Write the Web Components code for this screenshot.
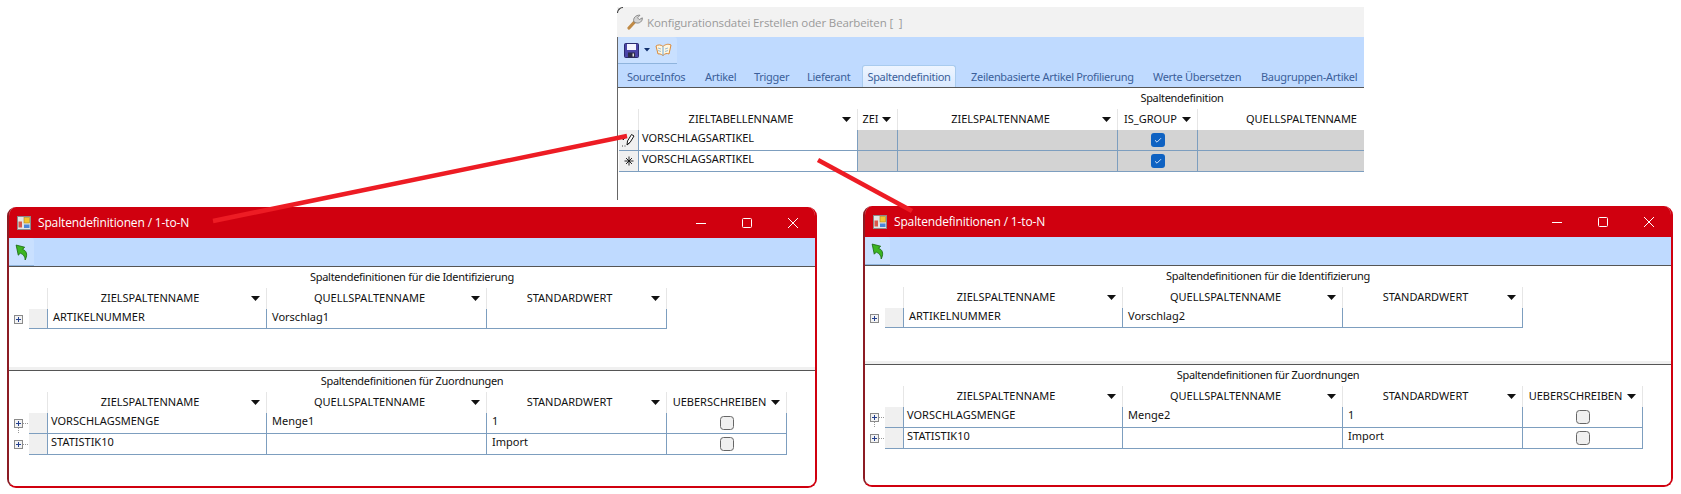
<!DOCTYPE html>
<html lang="de">
<head>
<meta charset="utf-8">
<title>Spaltendefinition</title>
<style>
  html, body { margin: 0; padding: 0; background: #fff; overflow: hidden; }
  body { width: 1681px; height: 494px; position: relative; font-family: "Noto Sans", "Liberation Sans", sans-serif; }
</style>
</head>
<body>
<template id="tpl-window">
  <style>
    :host { position: absolute; display: flex; flex-direction: column; box-sizing: border-box; overflow: hidden;
      background: #f0f0f0; border: solid #d0000f; border-width: 0 2px 2px 2px; border-left-color: #8c1c24; border-radius: 9px; }
    .title { flex: none; height: 31px; margin: 0 -2px; display: flex; align-items: center; background: #d0000f; color: #fff;
      font: 12px "Open Sans", "Noto Sans", sans-serif; letter-spacing: -.15px; padding-left: 10px; }
    ::slotted(.icon) { margin-right: 7px; flex: none; }
    .title .name { flex: 1; white-space: pre; }
    .controls { display: flex; padding-right: 1px; }
    .controls span { width: 46px; height: 31px; display: flex; align-items: center; justify-content: center; }
    .bar { flex: none; background: #bfdaff; }
    .body { flex: 1; min-height: 0; display: flex; flex-direction: column; gap: 3px; }
    :host([inactive]) { background: #fff; border: 0; border-left: 1px solid #666; border-radius: 0; overflow: visible; }
    :host([inactive])::before { content: ""; position: absolute; left: -1px; top: 0; width: 6px; height: 6px; box-sizing: border-box;
      border-top: 1px solid #333; border-left: 1px solid #333; border-radius: 6px 0 0 0; }
    :host([inactive]) .title { height: 30px; margin: 0 0 0 -1px; background: #f2f2f2; color: #9a9a9a; padding-left: 10px; font-size: 11.5px; letter-spacing: -.12px; }
    :host([inactive]) ::slotted(.icon) { margin-right: 4px; }
    :host([inactive]) .controls { display: none; }
  </style>
  <div class="title">
    <slot name="icon"></slot>
    <span class="name"><slot name="title"></slot></span>
    <div class="controls">
      <span><svg width="12" height="12" viewBox="0 0 12 12"><path d="M1 6.500h10" stroke="#fff" fill="none"/></svg></span>
      <span><svg width="12" height="12" viewBox="0 0 12 12"><rect x="1.500" y="1.500" width="9" height="9" rx="1" stroke="#fff" fill="none"/></svg></span>
      <span><svg width="12" height="12" viewBox="0 0 12 12"><path d="M1 1l10 10M11 1L1 11" stroke="#fff" fill="none"/></svg></span>
    </div>
  </div>
  <div class="bar"><slot name="bar"></slot></div>
  <div class="body"><slot></slot></div>
</template>

<template id="tpl-section">
  <style>
    :host { display: block; box-sizing: border-box; background: #fff; border-top: 1px solid #555; overflow: hidden; min-width: 0; }
    :host([fill]) { flex: 1; }
    .caption { height: 21px; line-height: 19px; text-align: center; font-size: 11px; color: #111;
      letter-spacing: -.3px; white-space: nowrap; }
  </style>
  <div class="caption"></div>
  <slot></slot>
</template>

<template id="tpl-bar">
  <style>
    :host { display: flex; height: 27px; align-items: stretch; }
    .btns { display: flex; align-items: center; gap: 5px; padding: 0 5px 0 6px; background: #c9e0ff; border-bottom: 1px solid #8fb4dd; border-radius: 3px 3px 0 0; box-sizing: border-box; height: 100%; }
  </style>
  <div class="btns"><slot></slot></div>
</template>

<template id="tpl-tabs">
  <style>
    :host { display: flex; height: 23px; align-items: flex-end; font-size: 11px; color: #3b5f9a; }
  </style>
  <slot></slot>
</template>

<template id="tpl-tab">
  <style>
    :host { display: block; box-sizing: border-box; height: 21px; line-height: 21px; white-space: nowrap; margin-top: 2px; letter-spacing: -.3px; }
    :host([active]) { height: 22px; background: linear-gradient(#eef5ff, #d9e9ff); border: 1px solid #a9cbee; border-bottom: 0; border-radius: 3px 3px 0 0; }
  </style>
  <slot></slot>
</template>

<script>
  // small stamps shared by the table cells
  const ICONS = {
    plus: `<svg width="9" height="9" viewBox="0 0 9 9"><rect x=".5" y=".5" width="8" height="8" fill="#f3f3f3" stroke="#8a8a8a"/><path d="M2 4.500h5M4.500 2v5" stroke="#24408e"/></svg>`,
    pencil: `<svg width="18" height="18" viewBox="0 0 18 18"><path d="M7 14l.5-4 4-6.500 2.500 1.500-4 6.500zM7 14l2.500-2.500" fill="#fff" stroke="#111"/><path d="M2 15h1M4.500 15h1M3 5l2 2-2 2z" stroke="#111" fill="#111" stroke-width=".8"/></svg>`,
    star: `<svg width="18" height="18" viewBox="0 0 18 18"><path d="M9 4.500v9M4.500 9h9M6 6l6 6M12 6l-6 6" stroke="#111" stroke-width=".9"/></svg>`,
    on: `<svg width="14" height="14" viewBox="0 0 14 14"><rect width="14" height="14" rx="3" fill="#0f62c2"/><path d="M4 7.300l2 1.900 4-4" stroke="#cfe2fb" fill="none"/></svg>`,
    off: `<svg width="14" height="14" viewBox="0 0 14 14"><rect x=".5" y=".5" width="13" height="13" rx="3" fill="#f0f0f0" stroke="#666"/></svg>`,
    arrow: `<svg width="9" height="5" viewBox="0 0 9 5"><path d="M0 0h9L4.500 5z" fill="#111"/></svg>`
  };

  class AppWindow extends HTMLElement {
    constructor() {
      super();
      this.attachShadow({ mode: 'open' }).appendChild(document.getElementById('tpl-window').content.cloneNode(true));
    }
  }

  class GridSection extends HTMLElement {
    constructor() {
      super();
      this.attachShadow({ mode: 'open' }).appendChild(document.getElementById('tpl-section').content.cloneNode(true));
    }
    connectedCallback() {
      this.shadowRoot.querySelector('.caption').textContent = this.getAttribute('caption');
      if (this.hasAttribute('pad')) {
        this.shadowRoot.querySelector('.caption').style.paddingLeft = this.getAttribute('pad') + 'px';
      }
    }
  }

  class ToolBar extends HTMLElement {
    constructor() {
      super();
      this.attachShadow({ mode: 'open' }).appendChild(document.getElementById('tpl-bar').content.cloneNode(true));
    }
  }

  class TabStrip extends HTMLElement {
    constructor() {
      super();
      this.attachShadow({ mode: 'open' }).appendChild(document.getElementById('tpl-tabs').content.cloneNode(true));
    }
  }

  class TabItem extends HTMLElement {
    constructor() {
      super();
      this.attachShadow({ mode: 'open' }).appendChild(document.getElementById('tpl-tab').content.cloneNode(true));
    }
  }

  // cols: JSON [[name, width]], rows: JSON [{m: marker, c: [cells]}]
  class DataTable extends HTMLElement {
    constructor() {
      super();
      this.attachShadow({ mode: 'open' });
    }
    connectedCallback() {
      const cols = JSON.parse(this.getAttribute('cols'));
      const rows = JSON.parse(this.getAttribute('rows'));
      const gutter = Number(this.getAttribute('gutter') || 0);
      const head = Number(this.getAttribute('head-width') || 18);
      const rowH = Number(this.getAttribute('row-h') || 21);
      const tree = this.hasAttribute('tree');
      const template = `${gutter ? gutter + 'px ' : ''}${head}px ${cols.map(c => c[1] + 'px').join(' ')}`;
      let html = `<style>
        :host { display: block; }
        .g { display: grid; grid-template-columns: ${template}; grid-auto-rows: ${rowH}px; grid-template-rows: 21px; justify-content: start; font-size: 11px; color: #111; }
        .g > div { box-sizing: border-box; min-width: 0; white-space: nowrap; overflow: hidden; }
        .hd { position: relative; text-align: center; line-height: 19px; border-right: 1px solid #e6e6e6; padding-right: 14px; }
        .hd.first { border-left: 1px solid #e6e6e6; }
        .hd svg { position: absolute; right: 6px; top: 8px; }
        .hd.clip { text-align: right; padding-right: 8px; border-right: 0; }
        .cell { border-right: 1px solid #7d9ebf; border-bottom: 1px solid #7d9ebf; line-height: 16px; padding-left: 5px; }
        .cell.first { border-left: 1px solid #7d9ebf; padding-left: var(--first-pad, 3px); }
        .cell.gray { background: #d3d3d3; }
        .cell.chk { display: flex; align-items: center; justify-content: center; padding: 0 0 1px; }
        .rh { background: #f0f0f0; border: solid #7d9ebf; border-width: 0 0 1px 0; display: flex; align-items: center; justify-content: center; }
        .gut { position: relative; }
        .gut svg { position: absolute; left: 5px; top: 6px; }
        .dots { position: absolute; left: 14px; top: 10px; width: 5px; border-top: 1px dotted #999; }
        .vdots { position: absolute; left: 9px; top: 15px; height: 7px; border-left: 1px dotted #999; }
      </style><div class="g">`;
      if (gutter) html += '<div></div>';
      html += '<div></div>';
      cols.forEach((c, i) => {
        const clip = c[2] === 'clip';
        html += `<div class="hd${i === 0 ? ' first' : ''}${clip ? ' clip' : ''}">${c[0]}${clip ? '' : ICONS.arrow}</div>`;
      });
      rows.forEach((r, ri) => {
        if (gutter) {
          html += `<div class="gut">${ICONS.plus}${tree ? '<span class="dots"></span>' : ''}${tree && ri < rows.length - 1 ? '<span class="vdots"></span>' : ''}</div>`;
        }
        html += `<div class="rh">${r.m ? ICONS[r.m] : ''}</div>`;
        r.c.forEach((c, i) => {
          const first = i === 0 ? ' first' : '';
          const gray = r.gray && r.gray.includes(i) ? ' gray' : '';
          if (c === '#on' || c === '#off') {
            html += `<div class="cell chk${first}${gray}">${ICONS[c.slice(1)]}</div>`;
          } else {
            html += `<div class="cell${first}${gray}">${c}</div>`;
          }
        });
      });
      html += '</div>';
      this.shadowRoot.innerHTML = html;
    }
  }

  customElements.define('app-window', AppWindow);
  customElements.define('grid-section', GridSection);
  customElements.define('tool-bar', ToolBar);
  customElements.define('tab-strip', TabStrip);
  customElements.define('tab-item', TabItem);
  customElements.define('data-table', DataTable);
</script>

<!-- main window, cropped on the right in the screenshot -->
<app-window inactive style="left:617px;top:7px;width:747px;height:193px;">
  <svg slot="icon" class="icon" width="16" height="16" viewBox="0 0 16 16">
    <path d="M2 14l6-6.500" stroke="#c08a45" stroke-width="3.200" stroke-linecap="round"/>
    <path d="M7 8C5.500 4.500 8.500 .8 13 1.200l-2.500 2.600 1.800 1.800 3-1.800c.5 3.500-3 6.200-6.500 5z" fill="#d4d4d4" stroke="#777" stroke-width=".8"/>
  </svg>
  <span slot="title">Konfigurationsdatei Erstellen oder Bearbeiten [  ]</span>
  <div slot="bar">
    <tool-bar style="width:58px">
      <svg width="15" height="15" viewBox="0 0 15 15"><rect x=".5" y=".5" width="14" height="14" rx="1" fill="#4b45a8" stroke="#2a2a6e"/><rect x="3" y="1" width="9" height="6" fill="#f4f4ff"/><rect x="4" y="9.500" width="7" height="5" fill="#2c2c48"/><rect x="8.500" y="10.500" width="1.500" height="3" fill="#ddd"/></svg>
      <svg width="6" height="4" viewBox="0 0 6 4"><path d="M0 0h6L3 3.500z" fill="#12306e"/></svg>
      <svg width="17" height="14" viewBox="0 0 17 14"><path d="M1 3c2-1.500 5-1.500 7 .5 2-2 5-3 8-1.500l-2 9c-2-1-4-.5-6 1.500-2-1.500-4-2-5-1.500z" fill="#fff6df" stroke="#d98a3a"/><path d="M8 3.500L8 12.500" stroke="#6aa5d8"/><path d="M3 5l3 1M3 7.500l3 1M10 6l3-1M10 8.500l3-1" stroke="#6aa5d8" stroke-width=".7"/></svg>
    </tool-bar>
    <tab-strip>
      <tab-item style="margin-left:9px;width:78px">SourceInfos</tab-item>
      <tab-item style="width:49px">Artikel</tab-item>
      <tab-item style="width:53px">Trigger</tab-item>
      <tab-item style="width:55px">Lieferant</tab-item>
      <tab-item active style="width:94px;text-align:center">Spaltendefinition</tab-item>
      <tab-item style="margin-left:15px;width:182px">Zeilenbasierte Artikel Profilierung</tab-item>
      <tab-item style="width:108px">Werte Übersetzen</tab-item>
      <tab-item>Baugruppen-Artikel</tab-item>
    </tab-strip>
  </div>
  <grid-section fill caption="Spaltendefinition" pad="382">
    <data-table head-width="19" style="margin-left:1px;width:746px;display:block;overflow:hidden"
      cols='[["ZIELTABELLENNAME",220],["ZEI",40],["ZIELSPALTENNAME",220],["IS_GROUP",80],["QUELLSPALTENNAME",167,"clip"]]'
      rows='[{"m":"pencil","c":["VORSCHLAGSARTIKEL","","","#on",""],"gray":[1,2,3,4]},{"m":"star","c":["VORSCHLAGSARTIKEL","","","#on",""],"gray":[1,2,3,4]}]'></data-table>
  </grid-section>
</app-window>

<!-- left dialog -->
<app-window style="left:7px;top:207px;width:810px;height:281px;">
  <svg slot="icon" class="icon" width="14" height="14" viewBox="0 0 14 14"><rect x=".5" y=".5" width="13" height="13" fill="#e4e4e4" stroke="#8a8a8a"/><rect x="7" y="1.500" width="5.500" height="5.500" fill="#f4c430" stroke="#b0861a" stroke-width=".6"/><rect x="1.500" y="5.500" width="3.500" height="6" fill="#d9574b"/><rect x="7" y="8.500" width="5.500" height="3.500" fill="#4a86d8"/></svg>
  <span slot="title">Spaltendefinitionen / 1-to-N</span>
  <tool-bar slot="bar" style="width:27px;height:28px;">
    <svg width="14" height="16" viewBox="0 0 13 15"><path d="M1 1l8 2-2 2c3 1 5.500 4 2.500 10C9.500 12 8 10 5 8.500L3 10.500z" fill="#3cb521" stroke="#1d6b14" stroke-width=".8"/></svg>
  </tool-bar>
  <grid-section caption="Spaltendefinitionen für die Identifizierung" style="height:101px">
    <data-table gutter="20" row-h="20" style="--first-pad:5px" cols='[["ZIELSPALTENNAME",220],["QUELLSPALTENNAME",220],["STANDARDWERT",180]]'
      rows='[{"c":["ARTIKELNUMMER","Vorschlag1",""]}]'></data-table>
  </grid-section>
  <grid-section fill caption="Spaltendefinitionen für Zuordnungen">
    <data-table gutter="20" tree cols='[["ZIELSPALTENNAME",220],["QUELLSPALTENNAME",220],["STANDARDWERT",180],["UEBERSCHREIBEN",120]]'
      rows='[{"c":["VORSCHLAGSMENGE","Menge1","1","#off"]},{"c":["STATISTIK10","","Import","#off"]}]'></data-table>
  </grid-section>
</app-window>

<!-- right dialog -->
<app-window style="left:863px;top:206px;width:810px;height:281px;">
  <svg slot="icon" class="icon" width="14" height="14" viewBox="0 0 14 14"><rect x=".5" y=".5" width="13" height="13" fill="#e4e4e4" stroke="#8a8a8a"/><rect x="7" y="1.500" width="5.500" height="5.500" fill="#f4c430" stroke="#b0861a" stroke-width=".6"/><rect x="1.500" y="5.500" width="3.500" height="6" fill="#d9574b"/><rect x="7" y="8.500" width="5.500" height="3.500" fill="#4a86d8"/></svg>
  <span slot="title">Spaltendefinitionen / 1-to-N</span>
  <tool-bar slot="bar" style="width:27px;height:28px;">
    <svg width="14" height="16" viewBox="0 0 13 15"><path d="M1 1l8 2-2 2c3 1 5.500 4 2.500 10C9.500 12 8 10 5 8.500L3 10.500z" fill="#3cb521" stroke="#1d6b14" stroke-width=".8"/></svg>
  </tool-bar>
  <grid-section caption="Spaltendefinitionen für die Identifizierung" style="height:96px">
    <data-table gutter="20" row-h="20" style="--first-pad:5px" cols='[["ZIELSPALTENNAME",220],["QUELLSPALTENNAME",220],["STANDARDWERT",180]]'
      rows='[{"c":["ARTIKELNUMMER","Vorschlag2",""]}]'></data-table>
  </grid-section>
  <grid-section fill caption="Spaltendefinitionen für Zuordnungen">
    <data-table gutter="20" tree cols='[["ZIELSPALTENNAME",220],["QUELLSPALTENNAME",220],["STANDARDWERT",180],["UEBERSCHREIBEN",120]]'
      rows='[{"c":["VORSCHLAGSMENGE","Menge2","1","#off"]},{"c":["STATISTIK10","","Import","#off"]}]'></data-table>
  </grid-section>
</app-window>

<!-- the red annotation lines lie over everything -->
<svg width="1681" height="494" style="position:absolute;left:0;top:0;pointer-events:none">
  <path d="M213 221L627 136" stroke="#ed1c24" stroke-width="4.500" fill="none"/>
  <path d="M818 160L912 211" stroke="#ed1c24" stroke-width="4.500" fill="none"/>
</svg>
</body>
</html>
